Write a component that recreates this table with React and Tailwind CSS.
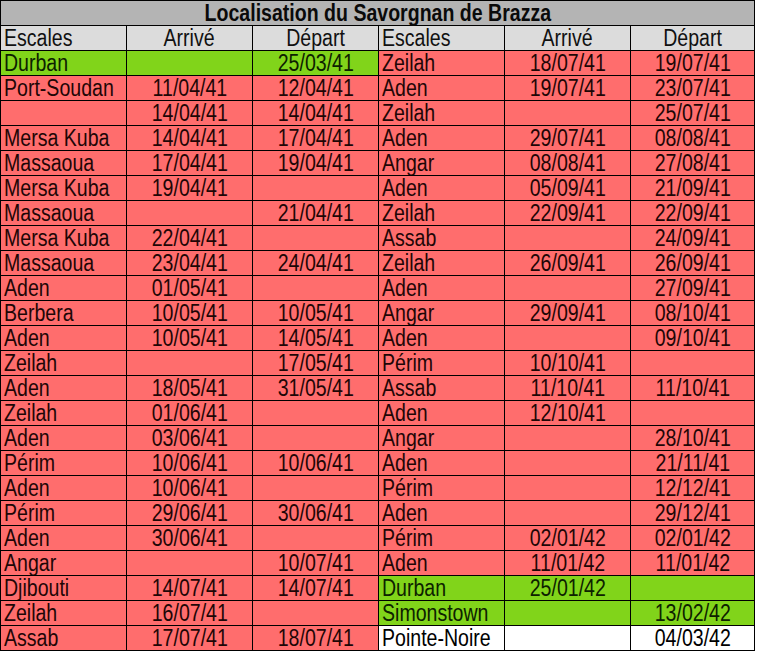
const left = [
  ['Durban', '', '25/03/41', 'g'],
  ['Port-Soudan', '11/04/41', '12/04/41'],
  ['', '14/04/41', '14/04/41'],
  ['Mersa Kuba', '14/04/41', '17/04/41'],
  ['Massaoua', '17/04/41', '19/04/41'],
  ['Mersa Kuba', '19/04/41', ''],
  ['Massaoua', '', '21/04/41'],
  ['Mersa Kuba', '22/04/41', ''],
  ['Massaoua', '23/04/41', '24/04/41'],
  ['Aden', '01/05/41', ''],
  ['Berbera', '10/05/41', '10/05/41'],
  ['Aden', '10/05/41', '14/05/41'],
  ['Zeilah', '', '17/05/41'],
  ['Aden', '18/05/41', '31/05/41'],
  ['Zeilah', '01/06/41', ''],
  ['Aden', '03/06/41', ''],
  ['Périm', '10/06/41', '10/06/41'],
  ['Aden', '10/06/41', ''],
  ['Périm', '29/06/41', '30/06/41'],
  ['Aden', '30/06/41', ''],
  ['Angar', '', '10/07/41'],
  ['Djibouti', '14/07/41', '14/07/41'],
  ['Zeilah', '16/07/41', ''],
  ['Assab', '17/07/41', '18/07/41'],
];

const right = [
  ['Zeilah', '18/07/41', '19/07/41'],
  ['Aden', '19/07/41', '23/07/41'],
  ['Zeilah', '', '25/07/41'],
  ['Aden', '29/07/41', '08/08/41'],
  ['Angar', '08/08/41', '27/08/41'],
  ['Aden', '05/09/41', '21/09/41'],
  ['Zeilah', '22/09/41', '22/09/41'],
  ['Assab', '', '24/09/41'],
  ['Zeilah', '26/09/41', '26/09/41'],
  ['Aden', '', '27/09/41'],
  ['Angar', '29/09/41', '08/10/41'],
  ['Aden', '', '09/10/41'],
  ['Périm', '10/10/41', ''],
  ['Assab', '11/10/41', '11/10/41'],
  ['Aden', '12/10/41', ''],
  ['Angar', '', '28/10/41'],
  ['Aden', '', '21/11/41'],
  ['Périm', '', '12/12/41'],
  ['Aden', '', '29/12/41'],
  ['Périm', '02/01/42', '02/01/42'],
  ['Aden', '11/01/42', '11/01/42'],
  ['Durban', '25/01/42', '', 'g'],
  ['Simonstown', '', '13/02/42', 'g'],
  ['Pointe-Noire', '', '04/03/42', 'w'],
];

const tones = {
  r: 'bg-[#ff6d6d] text-[#1e0606]',
  g: 'bg-[#81d41a] text-[#0d2100]',
  w: 'bg-white text-black',
};

function Txt({ children, start }) {
  return (
    <span className={`inline-block whitespace-nowrap scale-x-[0.85] ${start ? 'origin-left' : 'origin-center'}`}>
      {children}
    </span>
  );
}

function Cell({ children, tone, start }) {
  return (
    <div
      className={`h-[25px] border-r border-b border-black leading-[24px] overflow-hidden ${start ? 'pl-[3px]' : 'text-center'} ${tone}`}
    >
      {children ? <Txt start={start}>{children}</Txt> : null}
    </div>
  );
}

function Cells({ row }) {
  const tone = tones[row[3] || 'r'];
  return (
    <>
      <Cell tone={tone} start>{row[0]}</Cell>
      <Cell tone={tone}>{row[1]}</Cell>
      <Cell tone={tone}>{row[2]}</Cell>
    </>
  );
}

function HeaderCells() {
  const tone = 'bg-[#dcdcdc] text-[#111]';
  return (
    <>
      <Cell tone={tone} start>Escales</Cell>
      <Cell tone={tone}>Arrivé</Cell>
      <Cell tone={tone}>Départ</Cell>
    </>
  );
}

export default function App() {
  return (
    <div className="w-[757px] h-[651px] bg-white font-['Liberation_Sans',Arial,sans-serif] text-[23px] text-[#111]">
      <div className="grid w-[755px] grid-cols-[126px_126px_126px_126px_126px_124px] border-l border-t border-black">
        <div className="col-span-6 h-[25px] border-r border-b border-black bg-[#b4b4b4] text-center font-bold leading-[24px] text-[#0a0a0a]">
          <Txt>Localisation du Savorgnan de Brazza</Txt>
        </div>
        <HeaderCells />
        <HeaderCells />
        {left.map((row, i) => (
          <div key={i} className="contents">
            <Cells row={row} />
            <Cells row={right[i]} />
          </div>
        ))}
      </div>
    </div>
  );
}
